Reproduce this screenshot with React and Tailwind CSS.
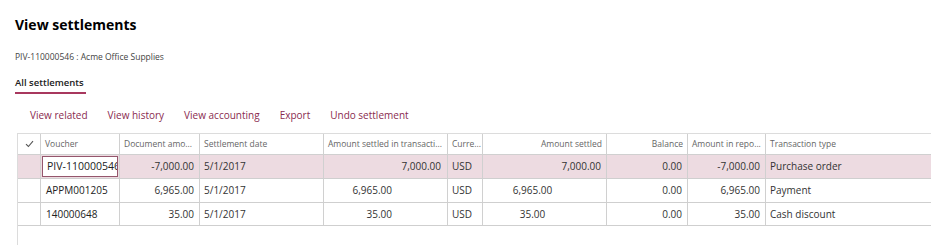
import React from "react";

const cols = [
  { key: "check", w: 23 },
  { key: "voucher", w: 79, label: "Voucher", align: "left" },
  { key: "doc", w: 80, label: "Document amo...", align: "left" },
  { key: "date", w: 124, label: "Settlement date", align: "left" },
  { key: "trans", w: 124, label: "Amount settled in transacti...", align: "left" },
  { key: "cur", w: 35, label: "Curre...", align: "left" },
  { key: "settled", w: 124, label: "Amount settled", align: "right" },
  { key: "bal", w: 81, label: "Balance", align: "right" },
  { key: "rep", w: 78, label: "Amount in repo...", align: "left" },
  { key: "type", w: 200, label: "Transaction type", align: "left" },
];

const rows = [
  { voucher: "PIV-110000546", doc: "-7,000.00", date: "5/1/2017", trans: "7,000.00", cur: "USD", settled: "7,000.00", bal: "0.00", rep: "-7,000.00", type: "Purchase order", sel: true },
  { voucher: "APPM001205", doc: "6,965.00", date: "5/1/2017", trans: "6,965.00", cur: "USD", settled: "6,965.00", bal: "0.00", rep: "6,965.00", type: "Payment" },
  { voucher: "140000648", doc: "35.00", date: "5/1/2017", trans: "35.00", cur: "USD", settled: "35.00", bal: "0.00", rep: "35.00", type: "Cash discount" },
];

export default function App() {
  const font = { fontFamily: '"Open Sans", "Noto Sans", sans-serif' };
  return (
    <div className="w-[931px] h-[245px] overflow-hidden bg-white text-[#333]" style={font}>
      <div className="pl-[15px] pt-[14px]">
        <h1 className="text-[14px] font-bold text-black leading-[22px]">View settlements</h1>
        <div className="mt-[15px] text-[8.5px] leading-[12px] text-[#444]">PIV-110000546 : Acme Office Supplies</div>
        <div className="mt-[13px] inline-block">
          <div className="text-[9.5px] font-semibold leading-[14px] text-[#222]">All settlements</div>
          <div className="mt-[2px] h-[2px] w-[71px] bg-[#a8385e]"></div>
        </div>
      </div>
      <div className="flex pl-[30px] mt-[13px] gap-[20px] text-[10px] leading-[16px] text-[#8a2b4f]">
        <span>View related</span>
        <span>View history</span>
        <span>View accounting</span>
        <span>Export</span>
        <span>Undo settlement</span>
      </div>
      <div className="ml-[17px] mt-[10px] border-l border-t border-[#dcdcdc] h-[120px]">
        <div className="flex h-[21px] border-b border-[#d0d0d0] text-[8.5px] text-[#666] items-center">
          {cols.map((c, i) => (
            <div
              key={c.key}
              style={{ width: c.w }}
              className={`h-full shrink-0 flex items-center px-[4px] whitespace-nowrap overflow-hidden ${i < cols.length - 1 ? "border-r border-[#d0d0d0]" : ""} ${c.align === "right" ? "justify-end" : ""} ${c.key === "check" ? "justify-center" : ""}`}
            >
              {c.key === "check" ? (
                <svg width="9" height="8" viewBox="0 0 9 8" fill="none">
                  <path d="M1 4.2 L3.4 6.5 L8 1.2" stroke="#555" strokeWidth="1.1" />
                </svg>
              ) : (
                c.label
              )}
            </div>
          ))}
        </div>
        {rows.map((r, ri) => (
          <div
            key={ri}
            className={`flex ${ri === 2 ? "h-[23px]" : "h-[24px]"} border-b border-[#cfcfcf] text-[10px] ${r.sel ? "bg-[#eddbe1]" : "bg-white"}`}
          >
            <div style={{ width: 23 }} className="shrink-0 border-r border-[#d0d0d0]"></div>
            <div style={{ width: 79 }} className="shrink-0 border-r border-[#d0d0d0] relative">
              {r.sel ? (
                <div className="absolute inset-x-[1px] top-[1px] bottom-[1px] border border-[#94566c] bg-white flex items-center pl-[4px] overflow-hidden whitespace-nowrap text-[10.5px] text-[#222]">
                  {r.voucher}
                </div>
              ) : (
                <div className="h-full flex items-center pl-[5px] text-[#222]">{r.voucher}</div>
              )}
            </div>
            <div style={{ width: 80 }} className="shrink-0 border-r border-[#d0d0d0] flex items-center justify-end pr-[5px]">{r.doc}</div>
            <div style={{ width: 124 }} className="shrink-0 border-r border-[#d0d0d0] flex items-center pl-[4px]">{r.date}</div>
            <div style={{ width: 124 }} className={`shrink-0 border-r border-[#d0d0d0] flex items-center justify-end ${r.sel ? "pr-[6px]" : "pr-[55px]"}`}>{r.trans}</div>
            <div style={{ width: 35 }} className="shrink-0 border-r border-[#d0d0d0] flex items-center pl-[4px]">{r.cur}</div>
            <div style={{ width: 124 }} className={`shrink-0 border-r border-[#d0d0d0] flex items-center ${r.sel ? "justify-end pr-[5px]" : "justify-center pr-[24px]"}`}>{r.settled}</div>
            <div style={{ width: 81 }} className="shrink-0 border-r border-[#d0d0d0] flex items-center justify-end pr-[5px]">{r.bal}</div>
            <div style={{ width: 78 }} className="shrink-0 border-r border-[#d0d0d0] flex items-center justify-end pr-[5px]">{r.rep}</div>
            <div className="flex-1 flex items-center pl-[4px] whitespace-nowrap">{r.type}</div>
          </div>
        ))}
      </div>
    </div>
  );
}
